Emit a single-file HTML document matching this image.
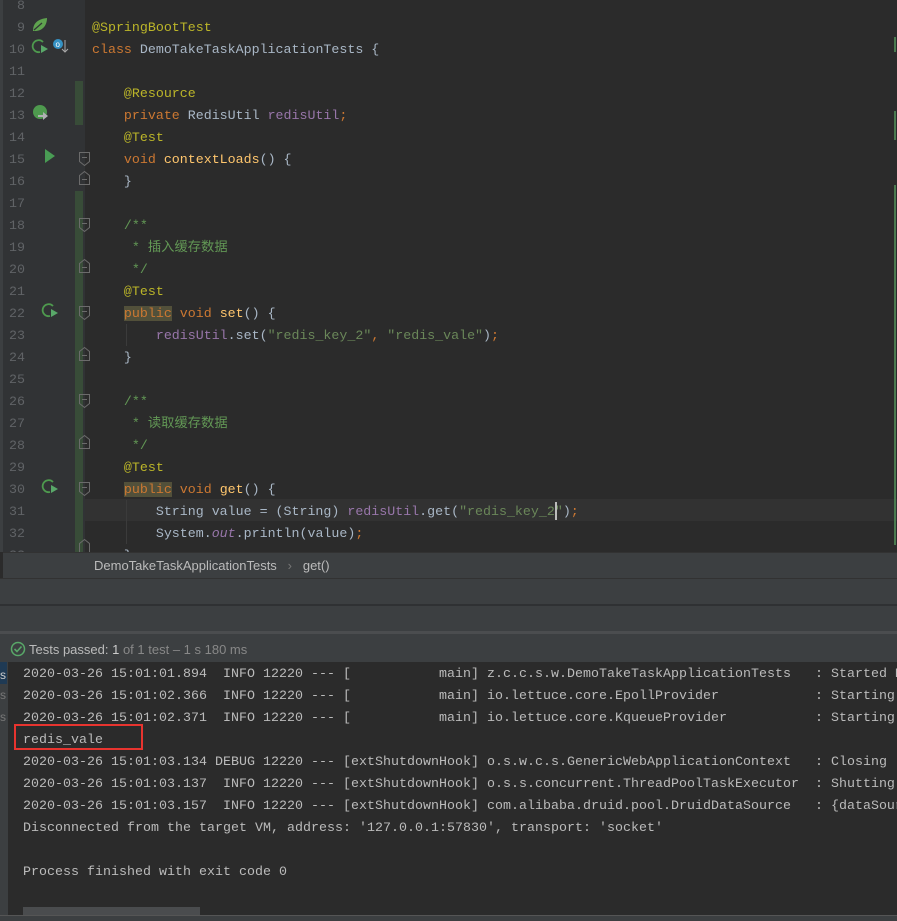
<!DOCTYPE html>
<html><head><meta charset="utf-8"><style>
*{margin:0;padding:0;box-sizing:border-box}
body{width:897px;height:921px;background:#2b2b2b;position:relative;overflow:hidden;font-family:"Liberation Mono",monospace;}
.abs{position:absolute}
#gut{left:3px;top:0;width:82px;height:552px;background:#313335}
#lstrip{left:0;top:0;width:3px;height:552px;background:#3c3f41}
.ln{position:absolute;left:3px;width:22px;text-align:right;color:#606366;font-size:13.3px;line-height:22px;height:22px;margin-top:1px}
.code{position:absolute;left:92px;font-size:13.3px;line-height:22px;height:22px;white-space:pre;color:#a9b7c6;margin-top:1px}
.k{color:#cc7832}.a{color:#bbb529}.f{color:#ffc66d}.s{color:#6a8759}.c{color:#629755}.p{color:#9876aa}.i{color:#9876aa;font-style:italic}
.cn{font-family:"Liberation Mono","Noto Sans CJK SC",monospace}
.pub{background:#52503a}
.green{position:absolute;left:75px;width:8px;background:#384c38}
.mark{position:absolute;left:894px;width:2px;background:#4a7a4f}
.con{position:absolute;left:23px;font-size:13.3px;line-height:22px;white-space:pre;color:#bbbbbb;margin-top:1px;letter-spacing:0.02px}
</style></head><body>
<div class="abs" id="lstrip"></div>
<div class="abs" id="gut"></div>
<div class="green" style="top:81px;height:44px"></div>
<div class="green" style="top:191px;height:361px"></div>
<div class="abs" style="left:85px;top:499px;width:812px;height:22px;background:#323232"></div>
<div class="mark" style="top:37px;height:15px"></div>
<div class="mark" style="top:111px;height:29px"></div>
<div class="mark" style="top:185px;height:360px"></div>

<div class="ln" style="top:-6px">8</div>
<div class="ln" style="top:16px">9</div>
<div class="ln" style="top:38px">10</div>
<div class="ln" style="top:60px">11</div>
<div class="ln" style="top:82px">12</div>
<div class="ln" style="top:104px">13</div>
<div class="ln" style="top:126px">14</div>
<div class="ln" style="top:148px">15</div>
<div class="ln" style="top:170px">16</div>
<div class="ln" style="top:192px">17</div>
<div class="ln" style="top:214px">18</div>
<div class="ln" style="top:236px">19</div>
<div class="ln" style="top:258px">20</div>
<div class="ln" style="top:280px">21</div>
<div class="ln" style="top:302px">22</div>
<div class="ln" style="top:324px">23</div>
<div class="ln" style="top:346px">24</div>
<div class="ln" style="top:368px">25</div>
<div class="ln" style="top:390px">26</div>
<div class="ln" style="top:412px">27</div>
<div class="ln" style="top:434px">28</div>
<div class="ln" style="top:456px">29</div>
<div class="ln" style="top:478px">30</div>
<div class="ln" style="top:500px">31</div>
<div class="ln" style="top:522px">32</div>
<div class="ln" style="top:544px">33</div>

<svg class="abs" style="left:30px;top:15px" width="20" height="20"><path d="M3 16 C3 8 8 4 17 3 C17 11 12 16 5 16 Z" fill="#5fa34f"/><path d="M4 15 L12 8" stroke="#313335" stroke-width="1.2"/></svg>
<svg class="abs" style="left:30px;top:37px" width="40" height="20"><path d="M13 5 A6 6 0 1 0 10 15" stroke="#4e9a4e" stroke-width="1.8" fill="none"/><path d="M11 8 L18 12 L11 16 Z" fill="#59a869"/><circle cx="28" cy="7" r="5" fill="#3592c4"/><text x="25.5" y="10" font-size="8" fill="#fff" font-family="Liberation Sans">o</text><path d="M35 3 V15 M32 12 L35 15 L38 12" stroke="#aaa" fill="none"/></svg>
<svg class="abs" style="left:32px;top:104px" width="20" height="20"><circle cx="8" cy="8" r="7" fill="#4e9a4e"/><path d="M6 11 H11 V8 L16 12 L11 16 V13 H6 Z" fill="#afb1b3"/></svg>
<svg class="abs" style="left:44px;top:148px" width="12" height="16"><path d="M1 1 L11 8 L1 15 Z" fill="#499c54"/></svg>
<svg class="abs" style="left:40px;top:302px" width="20" height="20"><path d="M13 4 A6 6 0 1 0 10 14" stroke="#4e9a4e" stroke-width="1.8" fill="none"/><path d="M11 7 L18 11 L11 15 Z" fill="#59a869"/></svg>
<svg class="abs" style="left:40px;top:478px" width="20" height="20"><path d="M13 4 A6 6 0 1 0 10 14" stroke="#4e9a4e" stroke-width="1.8" fill="none"/><path d="M11 7 L18 11 L11 15 Z" fill="#59a869"/></svg>
<svg class="abs" style="left:78px;top:0" width="14" height="552" fill="none" stroke="#6b6b6b">
<path d="M1.5 152.5 H11.5 V161.5 L6.5 165.5 L1.5 161.5 Z M4 157.5 H9"/>
<path d="M1.5 184.5 H11.5 V175.5 L6.5 171.5 L1.5 175.5 Z M4 179.5 H9"/>
<path d="M1.5 218.5 H11.5 V227.5 L6.5 231.5 L1.5 227.5 Z M4 223.5 H9"/>
<path d="M1.5 272.5 H11.5 V263.5 L6.5 259.5 L1.5 263.5 Z M4 267.5 H9"/>
<path d="M1.5 306.5 H11.5 V315.5 L6.5 319.5 L1.5 315.5 Z M4 311.5 H9"/>
<path d="M1.5 360.5 H11.5 V351.5 L6.5 347.5 L1.5 351.5 Z M4 355.5 H9"/>
<path d="M1.5 394.5 H11.5 V403.5 L6.5 407.5 L1.5 403.5 Z M4 399.5 H9"/>
<path d="M1.5 448.5 H11.5 V439.5 L6.5 435.5 L1.5 439.5 Z M4 443.5 H9"/>
<path d="M1.5 482.5 H11.5 V491.5 L6.5 495.5 L1.5 491.5 Z M4 487.5 H9"/>
<path d="M1.5 552 V543.5 L6.5 539.5 L11.5 543.5 V552"/>
</svg>
<div class="abs" style="left:126px;top:324px;width:1px;height:22px;background:#3b3b3b"></div>
<div class="abs" style="left:126px;top:500px;width:1px;height:44px;background:#3b3b3b"></div>

<div class="code a" style="top:16px">@SpringBootTest</div>
<div class="code" style="top:38px"><span class="k">class </span>DemoTakeTaskApplicationTests {</div>
<div class="code" style="top:82px">    <span class="a">@Resource</span></div>
<div class="code" style="top:104px">    <span class="k">private </span>RedisUtil <span class="p">redisUtil</span><span class="k">;</span></div>
<div class="code" style="top:126px">    <span class="a">@Test</span></div>
<div class="code" style="top:148px">    <span class="k">void </span><span class="f">contextLoads</span>() {</div>
<div class="code" style="top:170px">    }</div>
<div class="code c" style="top:214px">    /**</div>
<div class="code c cn" style="top:236px">     * 插入缓存数据</div>
<div class="code c" style="top:258px">     */</div>
<div class="code" style="top:280px">    <span class="a">@Test</span></div>
<div class="code" style="top:302px">    <span class="k pub">public</span><span class="k"> void </span><span class="f">set</span>() {</div>
<div class="code" style="top:324px">        <span class="p">redisUtil</span>.set(<span class="s">"redis_key_2"</span><span class="k">, </span><span class="s">"redis_vale"</span>)<span class="k">;</span></div>
<div class="code" style="top:346px">    }</div>
<div class="code c" style="top:390px">    /**</div>
<div class="code c cn" style="top:412px">     * 读取缓存数据</div>
<div class="code c" style="top:434px">     */</div>
<div class="code" style="top:456px">    <span class="a">@Test</span></div>
<div class="code" style="top:478px">    <span class="k pub">public</span><span class="k"> void </span><span class="f">get</span>() {</div>
<div class="code" style="top:500px">        String value = (String) <span class="p">redisUtil</span>.get(<span class="s">"redis_key_2"</span>)<span class="k">;</span></div>
<div class="code" style="top:522px">        System.<span class="i">out</span>.println(value)<span class="k">;</span></div>
<div class="code" style="top:544px">    }</div>
<div class="abs" style="left:555px;top:502px;width:2px;height:18px;background:#bbbbbb"></div>

<div class="abs" style="left:0;top:552px;width:897px;height:26px;background:#3c3f41;border-top:1px solid #323232"></div>
<div class="abs" style="left:0;top:552px;width:3px;height:26px;background:#2b2b2b"></div>
<div class="abs" style="left:94px;top:558px;font:13px 'Liberation Sans',sans-serif;color:#bbbbbb;white-space:pre">DemoTakeTaskApplicationTests   <span style="color:#777">›</span>   get()</div>
<div class="abs" style="left:0;top:578px;width:897px;height:26px;background:#3c3f41;border-top:1px solid #323232"></div>
<div class="abs" style="left:0;top:604px;width:897px;height:2px;background:#2f3133"></div>
<div class="abs" style="left:0;top:606px;width:897px;height:26px;background:#3c3f41"></div>
<div class="abs" style="left:0;top:631px;width:897px;height:3px;background:#4b4d4f"></div>
<div class="abs" style="left:0;top:634px;width:897px;height:28px;background:#3c3f41"></div>
<svg class="abs" style="left:10px;top:641px" width="16" height="16"><circle cx="8" cy="8" r="6.5" fill="none" stroke="#59a869" stroke-width="1.5"/><path d="M4.5 8 L7 10.5 L11.5 5.5" stroke="#59a869" stroke-width="1.6" fill="none"/></svg>
<div class="abs" style="left:29px;top:642px;font:13px 'Liberation Sans',sans-serif;color:#bbbbbb;white-space:pre">Tests passed: <span style="color:#ccc">1</span><span style="color:#888"> of 1 test – 1 s 180 ms</span></div>

<div class="abs" style="left:0;top:662px;width:8px;height:253px;background:#3c3f41"></div>
<div class="abs" style="left:0;top:662px;width:7px;height:22px;background:#1f3a54;color:#ccc;font:12px 'Liberation Sans';padding:6px 0 0 0">s</div>
<div class="abs" style="left:0;top:688px;color:#777;font:12px 'Liberation Sans'">s</div>
<div class="abs" style="left:0;top:710px;color:#777;font:12px 'Liberation Sans'">s</div>
<div class="con" style="top:662px">2020-03-26 15:01:01.894  INFO 12220 --- [           main] z.c.c.s.w.DemoTakeTaskApplicationTests   : Started D</div>
<div class="con" style="top:684px">2020-03-26 15:01:02.366  INFO 12220 --- [           main] io.lettuce.core.EpollProvider            : Starting</div>
<div class="con" style="top:706px">2020-03-26 15:01:02.371  INFO 12220 --- [           main] io.lettuce.core.KqueueProvider           : Starting</div>
<div class="con" style="top:728px">redis_vale</div>
<div class="con" style="top:750px">2020-03-26 15:01:03.134 DEBUG 12220 --- [extShutdownHook] o.s.w.c.s.GenericWebApplicationContext   : Closing</div>
<div class="con" style="top:772px">2020-03-26 15:01:03.137  INFO 12220 --- [extShutdownHook] o.s.s.concurrent.ThreadPoolTaskExecutor  : Shutting</div>
<div class="con" style="top:794px">2020-03-26 15:01:03.157  INFO 12220 --- [extShutdownHook] com.alibaba.druid.pool.DruidDataSource   : {dataSour</div>
<div class="con" style="top:816px">Disconnected from the target VM, address: '127.0.0.1:57830', transport: 'socket'</div>
<div class="con" style="top:860px">Process finished with exit code 0</div>
<div class="abs" style="left:14px;top:724px;width:129px;height:26px;border:2px solid #e8342f"></div>
<div class="abs" style="left:23px;top:907px;width:177px;height:8px;background:#4a4c4e"></div>
<div class="abs" style="left:0;top:915px;width:897px;height:6px;background:#3c3f41;border-top:1px solid #555"></div>
</body></html>
